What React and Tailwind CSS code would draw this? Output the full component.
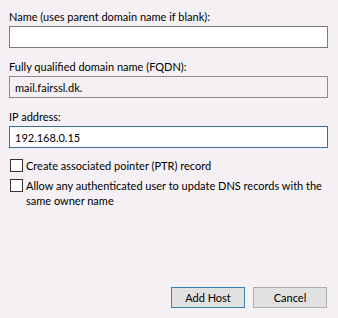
export default function App() {
    return (
        <div
            className="w-[338px] h-[318px] bg-[#f4f0f4] text-black text-[11px] flex flex-col pl-[9px] pr-[10px] pt-[9px] pb-[10px]"
            style={{ fontFamily: 'Lato, "Noto Sans", sans-serif' }}
        >
            {/* Name */}
            <label className="block h-[17px] leading-[16px]">Name (uses parent domain name if blank):</label>
            <input
                type="text"
                className="w-full h-[22px] bg-white border border-[#7a7a7a] px-[5px] outline-none"
            />

            {/* FQDN */}
            <label className="block h-[17px] leading-[16px] mt-[11px]">Fully qualified domain name (FQDN):</label>
            <div className="w-full h-[22px] border border-[#8a8a8a] px-[5px] flex items-center leading-none">
                mail.fairssl.dk.
            </div>

            {/* IP */}
            <label className="block h-[17px] leading-[16px] mt-[11px]">IP address:</label>
            <input
                type="text"
                defaultValue="192.168.0.15"
                className="w-full h-[22px] bg-white border border-[#3c6e94] px-[5px] outline-none"
            />

            {/* checkboxes */}
            <div className="flex items-start mt-[11px]">
                <span className="w-[13px] h-[13px] shrink-0 border border-[#333] bg-white mr-[3px] ml-[1px]" />
                <span className="leading-[13px]">Create associated pointer (PTR) record</span>
            </div>
            <div className="flex items-start mt-[7px]">
                <span className="w-[13px] h-[13px] shrink-0 border border-[#333] bg-white mr-[3px] ml-[1px]" />
                <span className="leading-[15px] -mt-[1px] w-[300px]">
                    Allow any authenticated user to update DNS records with the same owner name
                </span>
            </div>

            <div className="mt-auto flex justify-end gap-[8px] pr-[1px]">
                <button className="w-[74px] h-[21px] bg-[#e1e1e1] border border-[#3c7fb1] leading-none">
                    Add Host
                </button>
                <button className="w-[74px] h-[21px] bg-[#e1e1e1] border border-[#adadad] leading-none">
                    Cancel
                </button>
            </div>
        </div>
    );
}
